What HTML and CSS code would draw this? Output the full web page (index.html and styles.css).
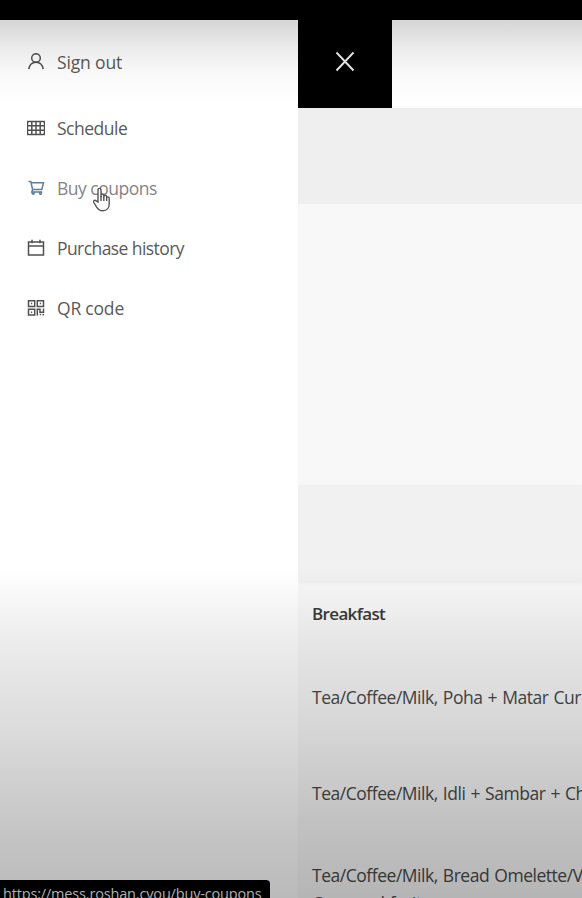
FILE: index.html
```html
<!DOCTYPE html>
<html lang="en">
<head>
<meta charset="utf-8">
<title>Mess</title>
<link rel="stylesheet" href="styles.css">
</head>
<body>
<div class="topbar"></div>
<div class="app">
  <nav class="menu">
    <a class="item first"><svg class="icon" viewBox="0 0 18 18"><circle cx="9" cy="5" r="4.3"/><path d="M1.8 16.2c.6-3.8 3-6.9 7.2-6.9s6.6 3.1 7.2 6.9"/></svg><span class="t-out">Sign out</span></a>
    <a class="item"><svg class="icon" viewBox="0 0 18 18"><path d="M.5 2.5h17v13H.5zM.5 6.8h17M.5 11.2h17M4.8 2.5v13M9 2.5v13M13.2 2.5v13"/></svg><span class="t-sched">Schedule</span></a>
    <a class="item hover"><svg class="icon" viewBox="0 0 18 18"><path d="M1.5 2.5h2.3l1.8 8h9.2l1.7-6.8H4.2M5.6 10.5l-.8 2.4h10.4"/><circle cx="6.2" cy="14.2" r="1"/><circle cx="13.5" cy="14.2" r="1"/></svg><span class="t-buy">Buy coupons</span></a>
    <a class="item"><svg class="icon" viewBox="0 0 18 18"><path d="M1.5 3h15v13h-15zM1.5 7h15M5 .8v3.4M13 .8v3.4"/></svg><span class="t-hist">Purchase history</span></a>
    <a class="item"><svg class="icon" viewBox="0 0 18 18"><path d="M1.5 1.8h6.2v5.7H1.5zM10.3 1.8h6.2v5.7h-6.2zM1.5 10.3h6.2V16H1.5zM4 4.6h1.2M12.8 4.6H14M4 13.2h1.2M10.3 16.5v-6.2h2.7v2.9h3.5v-3.7M12.7 15.6h1.4M16.2 15v1.4"/></svg><span class="t-qr">QR code</span></a>
  </nav>
  <main class="content">
    <header class="header"><button class="close" aria-label="Close"><svg viewBox="0 0 20 20"><path d="M1.5 1 18.5 19M18.5 1 1.5 19"/></svg></button></header>
    <section class="band"></section>
    <section class="blank"></section>
    <section class="band second"></section>
    <div class="meals">
      <div class="heading">Breakfast</div>
      <div class="meal a">Tea/Coffee/Milk, Poha + Matar Curry</div>
      <div class="meal b">Tea/Coffee/Milk, Idli + Sambar + Chutney</div>
      <div class="meal c">Tea/Coffee/Milk, Bread Omelette/Veg<br>Corn and fruit</div>
    </div>
  </main>
</div>
<div class="shade"></div>
<div class="status">https://mess.roshan.cyou/buy-coupons</div>
<svg class="pointer" viewBox="0 0 20 25"><path d="M6 15V3.1c0-2.3 3-2.3 3 0V10 8.5c0-1.8 2.8-1.8 2.8 0v2-1c0-1.7 2.8-1.7 2.8 0V11c0-1.5 2.6-1.5 2.6.3V17c0 4-2.5 6.8-6.3 6.8-3.6 0-5-1.6-6.6-4.2L1.8 15.5c-1-2 1.2-3 2.5-1.6z"/><path d="M9 9v5M11.8 10v4M14.6 11v3"/></svg>
</body>
</html>
```
FILE: styles.css
```css
* { box-sizing: border-box; }
body {
  margin: 0;
  height: 898px;
  overflow: hidden;
  position: relative;
  background: #fff;
  color: #333;
  font: 17.5px/24px "Open Sans", "Noto Sans", sans-serif;
  font-stretch: 88%;
  letter-spacing: -.5px;
}
.topbar { height: 20px; background: #000; }
.app { display: flex; height: 878px; }
.menu {
  width: 298px;
  flex: none;
  padding: 30px 0 0 27px;
  display: flex;
  flex-direction: column;
  gap: 36px;
}
.item { display: flex; align-items: center; height: 24px; gap: 12px; color: #5a5a5a; white-space: nowrap; }
.item span { margin-top: -1px; }
.item.first { margin-bottom: 6px; }
.icon { width: 18px; height: 18px; flex: none; fill: none; stroke: #505050; stroke-width: 1.5; }
.t-out { letter-spacing: -.15px; }
.t-hist { letter-spacing: -.57px; }
.t-qr { letter-spacing: -.2px; }
.hover { color: #858585; }
.hover .icon { stroke: #5f7f9c; }
.content { flex: 1; min-width: 0; overflow: hidden; background: #f8f8f9; }
.header { height: 88px; background: #fff; }
.close {
  display: flex;
  align-items: center;
  justify-content: center;
  width: 94px;
  height: 88px;
  padding: 0 1px 5px 0;
  border: 0;
  background: #000;
}
.close svg { width: 20px; height: 21px; fill: none; stroke: #eee; stroke-width: 1.9; }
.band { height: 96px; background: #efeff0; }
.blank { height: 281px; }
.band.second { height: 98px; background: #f1f1f1; box-shadow: 0 0 5px #f1f1f1; }
.meals { padding-left: 14px; white-space: nowrap; }
.heading { height: 32px; margin-top: 19px; font-weight: 600; font-size: 17px; letter-spacing: -.65px; color: #363b39; }
.meal { color: #484848; font-size: 17.5px; letter-spacing: -.47px; word-spacing: 1px; }
.meal.a { padding-top: 51px; }
.meal.b { padding-top: 72px; }
.meal.c { padding-top: 56px; line-height: 28px; }
.shade {
  position: absolute;
  inset: 20px 0 0;
  pointer-events: none;
  background:
    linear-gradient(rgba(0,0,0,.165), rgba(0,0,0,.08) 28px, rgba(0,0,0,.025) 53px, transparent 85px),
    linear-gradient(transparent 548px, rgba(0,0,0,.075) 622px, rgba(0,0,0,.15) 722px, rgba(0,0,0,.22) 800px, rgba(0,0,0,.27) 878px);
}
.status {
  position: absolute;
  left: 0;
  top: 880px;
  width: 270px;
  height: 18px;
  padding-left: 3px;
  overflow: hidden;
  border-top-right-radius: 4px;
  background: #000;
  color: #b0b0b0;
  font-size: 14.5px;
  line-height: 27px;
  letter-spacing: -.17px;
  white-space: nowrap;
}
.pointer { position: absolute; left: 92px; top: 187px; width: 20px; height: 25px; fill: #fff; stroke: #555; stroke-width: 1.4; }
```
